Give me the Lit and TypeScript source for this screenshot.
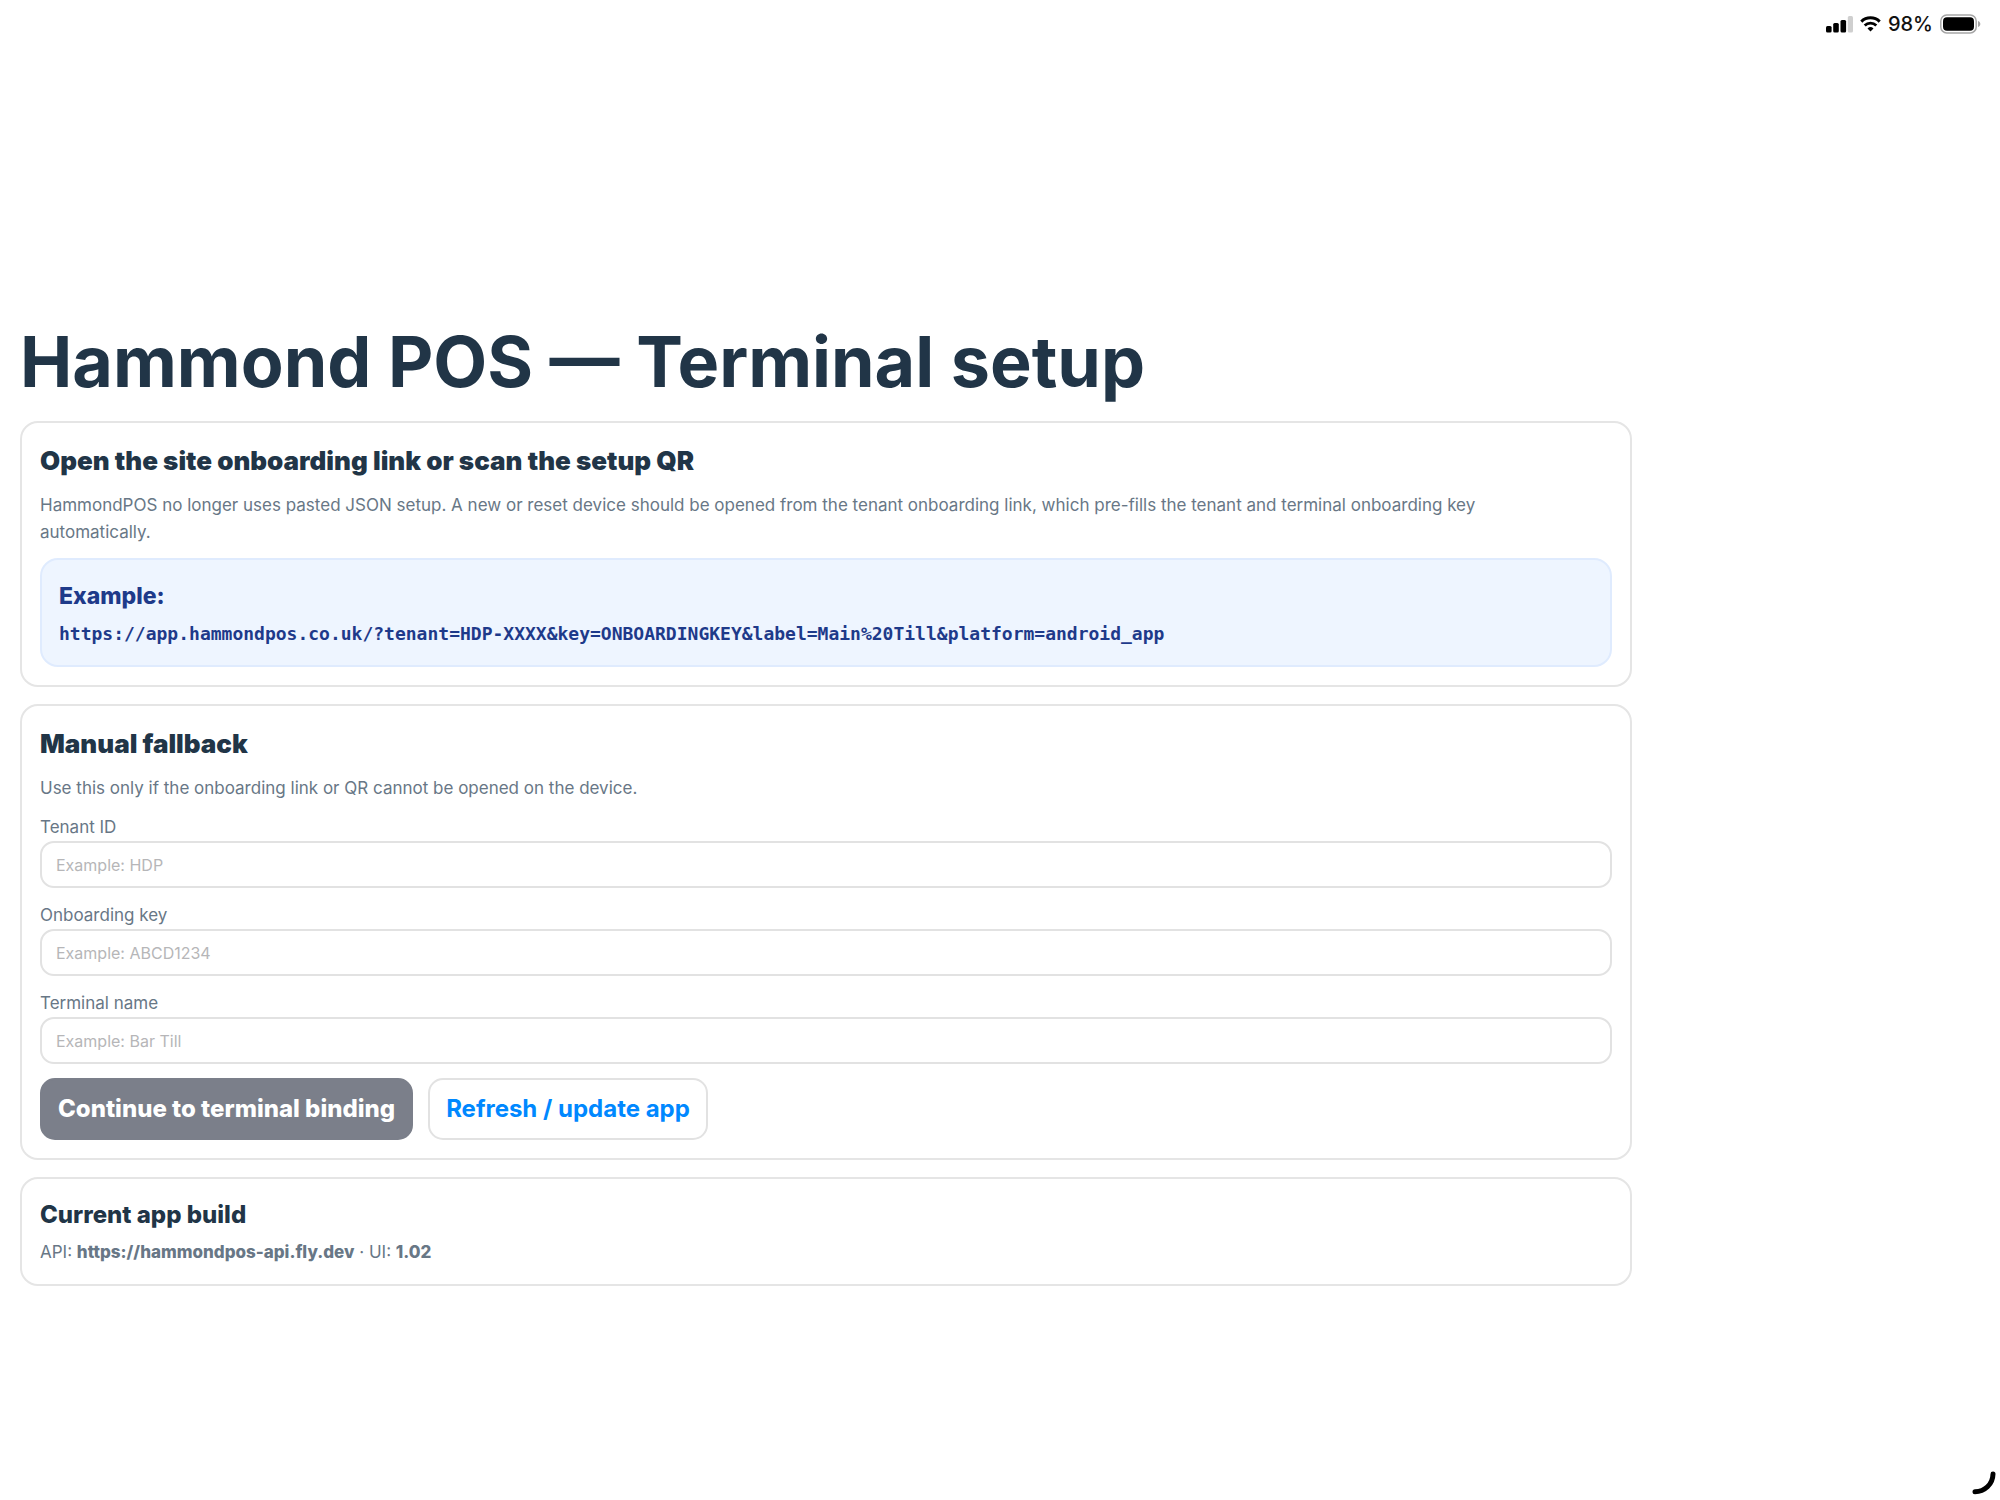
import { LitElement, html, css } from "lit";
import { customElement, state } from "lit/decorators.js";

interface Field {
  id: string;
  label: string;
  placeholder: string;
}

const FIELDS: Field[] = [
  { id: "tenant", label: "Tenant ID", placeholder: "Example: HDP" },
  { id: "key", label: "Onboarding key", placeholder: "Example: ABCD1234" },
  { id: "terminal", label: "Terminal name", placeholder: "Example: Bar Till" },
];

@customElement("status-bar")
export class StatusBar extends LitElement {
  static styles = css`
    :host {
      display: flex;
      justify-content: flex-end;
      align-items: center;
      gap: 7px;
      height: 48px;
      padding: 0 19px;
      font: 500 20px/24px Inter, "Liberation Sans", sans-serif;
      color: #111;
    }
    svg {
      display: block;
    }
  `;

  render() {
    return html`
      <svg width="27" height="18" viewBox="0 0 27 18" role="img" aria-label="Signal">
        <rect x="0" y="11" width="5.600" height="6.500" rx="1.500" fill="#000" />
        <rect x="7.200" y="8" width="5.600" height="9.500" rx="1.500" fill="#000" />
        <rect x="14.500" y="5" width="5.600" height="12.500" rx="1.500" fill="#000" />
        <rect x="21.800" y="1" width="5.200" height="16.500" rx="1.500" fill="#cfcfcf" />
      </svg>
      <svg width="21" height="16" viewBox="0 0 21 16" role="img" aria-label="Wi-Fi">
        <path d="M1.300 5.600a13.200 13.200 0 0 1 18.400 0" fill="none" stroke="#000" stroke-width="3" />
        <path d="M4.700 9.500a8.300 8.300 0 0 1 11.600 0" fill="none" stroke="#000" stroke-width="2.800" />
        <path d="M10.500 15.600l-3-3.100a4.300 4.300 0 0 1 6 0z" fill="#000" />
      </svg>
      <span>98%</span>
      <svg width="41" height="20" viewBox="0 0 41 20" role="img" aria-label="Battery">
        <rect x="0.800" y="0.900" width="35.400" height="18" rx="6" fill="none" stroke="#a6a6a6" stroke-width="1.500" />
        <rect x="3" y="3.200" width="31" height="13.500" rx="4" fill="#000" />
        <path d="M38 7v6c1.600-.5 2.300-1.600 2.300-3s-.7-2.500-2.300-3z" fill="#a6a6a6" />
      </svg>
    `;
  }
}

@customElement("app-root")
export class AppRoot extends LitElement {
  static styles = css`
    :host {
      display: flex;
      flex-direction: column;
      position: relative;
      min-height: 100vh;
      overflow: hidden;
      background: #fff;
      color: #213547;
      font-family: Inter, "Liberation Sans", sans-serif;
    }
    * {
      box-sizing: border-box;
      margin: 0;
    }
    main {
      flex: 1;
      display: flex;
      flex-direction: column;
      justify-content: center;
      gap: 17px;
      width: 100%;
      max-width: 1652px;
      padding: 58px 20px 0;
    }
    h1 {
      font-size: 70px;
      line-height: 84px;
      font-weight: 700;
    }
    .card {
      display: flex;
      flex-direction: column;
      gap: 12px;
      padding: 18px;
      border: 2px solid #e5e5e5;
      border-radius: 18px;
    }
    .card.compact {
      gap: 6px;
    }
    h2 {
      font-size: 26px;
      line-height: 39px;
      font-weight: 900;
    }
    h2.small {
      font-size: 24px;
      line-height: 36px;
      font-weight: 800;
    }
    .muted {
      max-width: 1520px;
      font-size: 17px;
      line-height: 27px;
      color: #687786;
    }
    .muted strong {
      font-weight: 800;
    }
    .example {
      display: flex;
      flex-direction: column;
      gap: 6px;
      padding: 18px 17px;
      border: 2px solid #dfebfe;
      border-radius: 18px;
      background: #eef5ff;
      color: #1e3a8a;
    }
    .example-title {
      font-size: 23px;
      line-height: 36px;
      font-weight: 800;
    }
    .url {
      font: 700 18px/27px "DejaVu Sans Mono", "Liberation Mono", monospace;
      overflow-wrap: anywhere;
    }
    form {
      display: flex;
      flex-direction: column;
      gap: 14px;
    }
    .field {
      display: flex;
      flex-direction: column;
    }
    input {
      width: 100%;
      height: 47px;
      padding: 0 14px;
      border: 2px solid #e2e2e2;
      border-radius: 14px;
      background: #fff;
      color: inherit;
      font: 400 16px/24px Inter, "Liberation Sans", sans-serif;
    }
    input::placeholder {
      color: #b6b6b8;
      opacity: 1;
    }
    .actions {
      display: flex;
      flex-wrap: wrap;
      gap: 15px;
    }
    button {
      height: 62px;
      padding: 0 16px;
      border: 2px solid #e2e2e2;
      border-radius: 15px;
      background: #fff;
      color: #0088ff;
      font: 700 24px/36px Inter, "Liberation Sans", sans-serif;
    }
    button.primary {
      border-color: #7b7f8a;
      background: #7b7f8a;
      color: #fff;
      font-weight: 800;
    }
    .corner {
      position: absolute;
      right: 0;
      bottom: 0;
      display: block;
    }
  `;

  @state() private values: Record<string, string> = {};

  private setValue(id: string, e: Event) {
    this.values = { ...this.values, [id]: (e.target as HTMLInputElement).value };
  }

  render() {
    return html`
      <status-bar></status-bar>
      <main>
        <h1>Hammond POS — Terminal setup</h1>
        <section class="card">
          <h2>Open the site onboarding link or scan the setup QR</h2>
          <p class="muted">
            HammondPOS no longer uses pasted JSON setup. A new or reset device should be opened from the
            tenant onboarding link, which pre-fills the tenant and terminal onboarding key automatically.
          </p>
          <div class="example">
            <p class="example-title">Example:</p>
            <p class="url">https://app.hammondpos.co.uk/?tenant=HDP-XXXX&amp;key=ONBOARDINGKEY&amp;label=Main%20Till&amp;platform=android_app</p>
          </div>
        </section>
        <section class="card">
          <h2>Manual fallback</h2>
          <p class="muted">Use this only if the onboarding link or QR cannot be opened on the device.</p>
          <form @submit=${(e: Event) => e.preventDefault()}>
            ${FIELDS.map(
              (f) => html`
                <div class="field">
                  <label class="muted" for=${f.id}>${f.label}</label>
                  <input
                    id=${f.id}
                    type="text"
                    placeholder=${f.placeholder}
                    .value=${this.values[f.id] ?? ""}
                    @input=${(e: Event) => this.setValue(f.id, e)}
                  />
                </div>
              `
            )}
            <div class="actions">
              <button class="primary" type="submit">Continue to terminal binding</button>
              <button type="button">Refresh / update app</button>
            </div>
          </form>
        </section>
        <section class="card compact">
          <h2 class="small">Current app build</h2>
          <p class="muted">API: <strong>https://hammondpos-api.fly.dev</strong> · UI: <strong>1.02</strong></p>
        </section>
      </main>
      <svg class="corner" width="30" height="30" viewBox="0 0 30 30" aria-hidden="true">
        <path d="M5 21.700C14.500 21.700 22.800 14.500 23 4" fill="none" stroke="#000" stroke-width="5" stroke-linecap="round" />
      </svg>
    `;
  }
}
